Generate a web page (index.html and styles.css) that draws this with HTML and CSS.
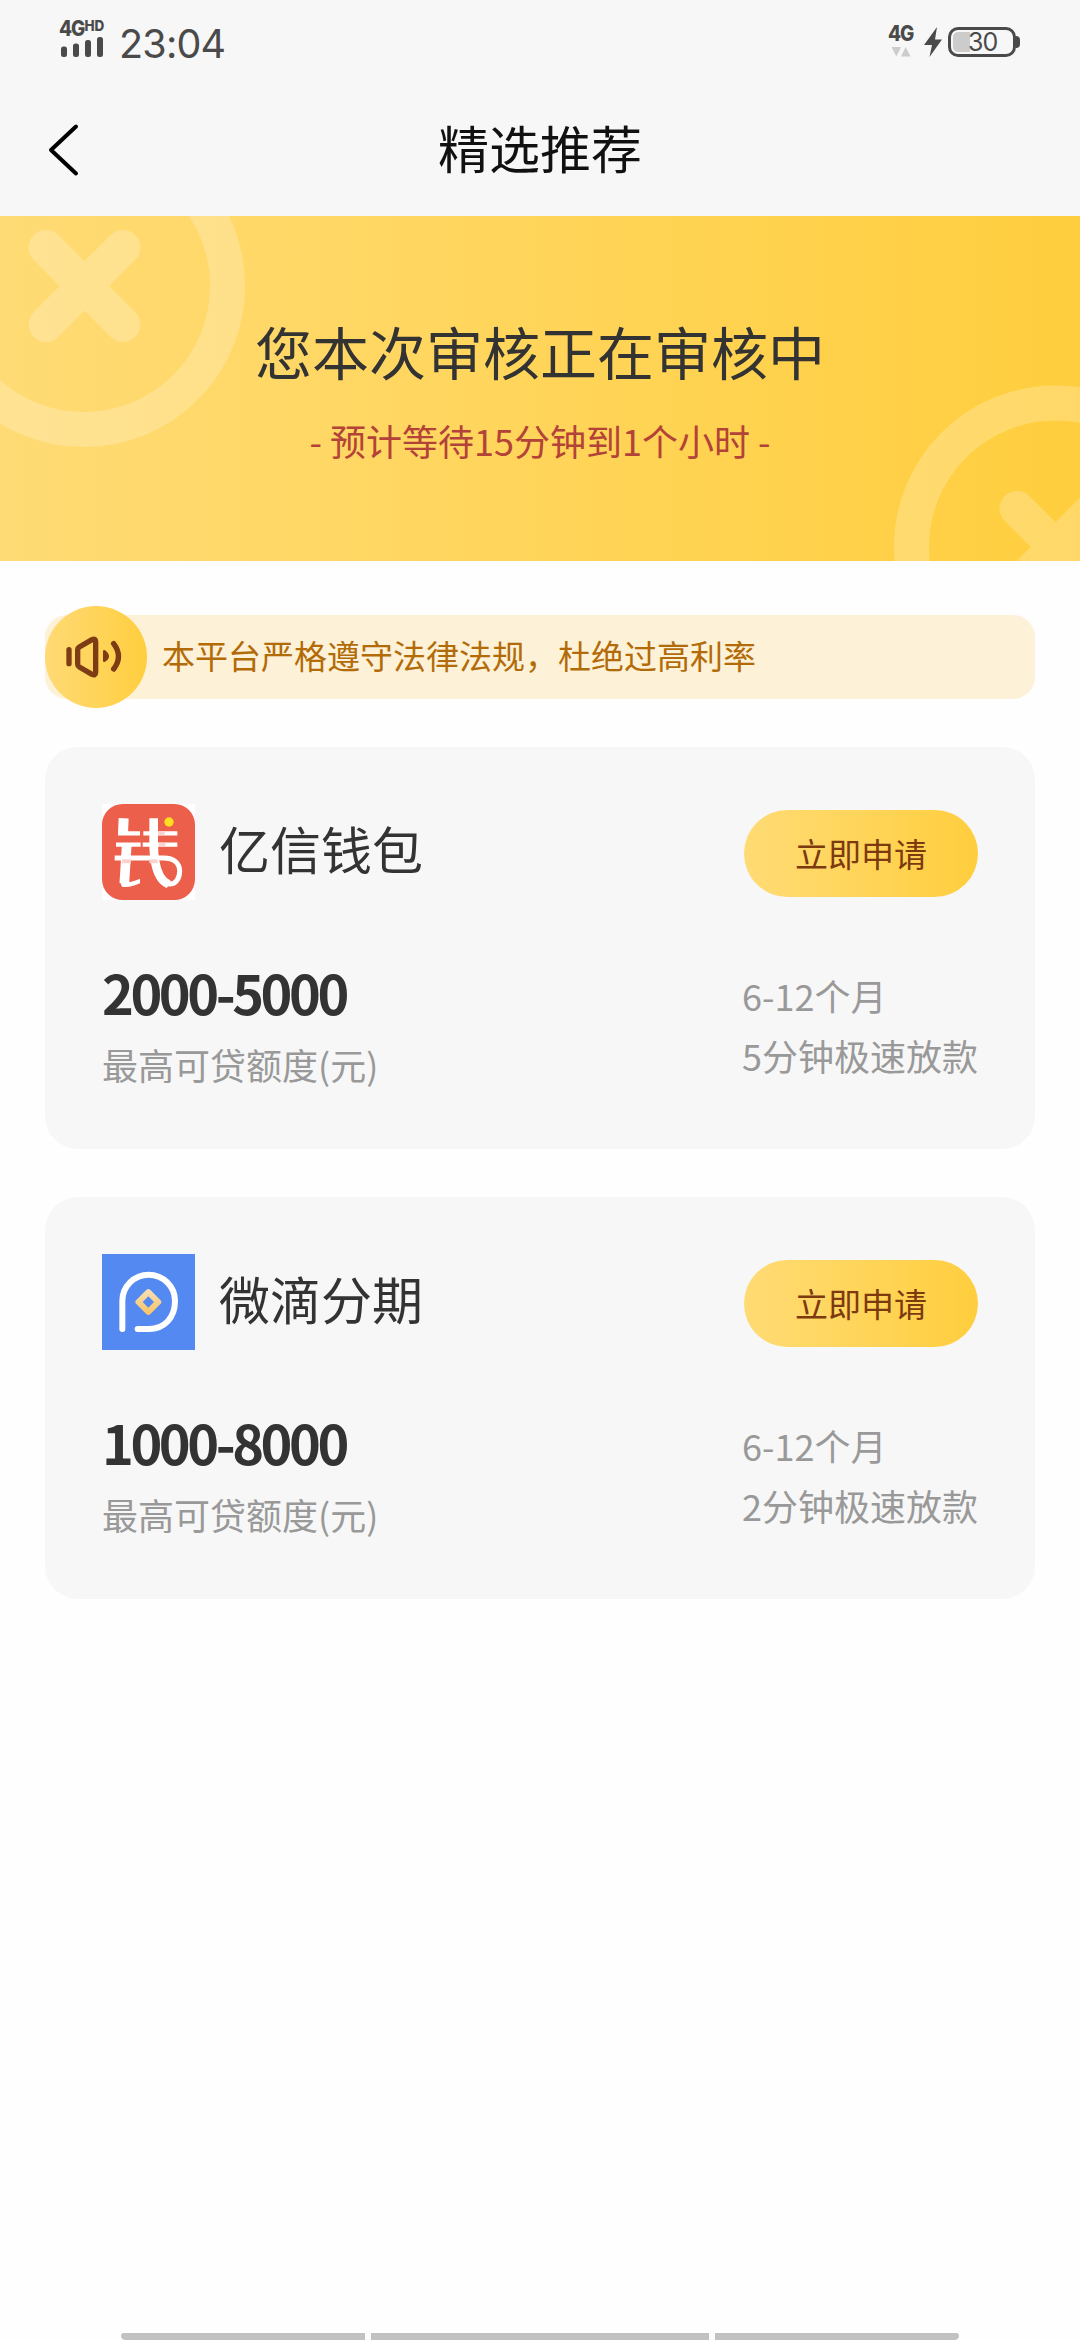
FILE: index.html
```html
<!DOCTYPE html>
<html lang="zh-CN">
<head>
<meta charset="utf-8">
<title>精选推荐</title>
<link rel="stylesheet" href="styles.css">
</head>
<body>
<div class="screen">
  <div class="status">
    <div class="status-left">
      <div class="signal">
        <div class="net">4G<span class="hd">HD</span></div>
        <svg class="bars" width="44" height="22" viewBox="0 0 44 22" fill="#4a4a4a"><rect x="1" y="10.500" width="6" height="10.500" rx="2.500"/><rect x="13" y="7.500" width="6" height="13.500" rx="2.500"/><rect x="25" y="4" width="6" height="17" rx="2.500"/><rect x="37" y="1" width="6" height="20" rx="2.500"/></svg>
      </div>
      <div class="clock">23:04</div>
    </div>
    <div class="status-right">
      <div class="data">
        <div class="net">4G</div>
        <svg width="20" height="10" viewBox="0 0 20 10" fill="#ccc"><path d="M0.500 0h9.500l-4.700 9.500zM10 9.500h9.500L14.700 0z"/></svg>
      </div>
      <svg class="bolt" width="18" height="30" viewBox="0 0 18 30" fill="#4a4a4a"><path d="M13 0 0 18h8L5.500 30 18 12.500H11z"/></svg>
      <div class="battery"><span class="battery-level"></span><span class="battery-text">30</span></div>
      <span class="battery-tip"></span>
    </div>
  </div>

  <header class="nav">
    <svg class="back" width="36" height="56" viewBox="0 0 36 56" fill="none" stroke="#000" stroke-width="4" stroke-linecap="round" stroke-linejoin="round"><path d="M31 4.500 6 28l25 23.500"/></svg>
    <h1 class="nav-title">精选推荐</h1>
  </header>

  <section class="banner">
    <svg class="banner-art" width="1080" height="345" viewBox="0 0 1080 345" fill="none">
      <g opacity=".22" stroke="#fff" stroke-width="35" stroke-linecap="round">
        <circle cx="84" cy="70" r="143.500"/><path d="M46 31.500 123 108.500M123 31.500 46 108.500"/>
        <circle cx="1055.500" cy="331" r="144"/><path d="M1017 292.500 1094 369.500M1094 292.500 1017 369.500"/>
      </g>
    </svg>
    <h2 class="banner-title">您本次审核正在审核中</h2>
    <p class="banner-sub">- 预计等待15分钟到1个小时 -</p>
  </section>

  <main class="content">
    <div class="notice">
      <div class="notice-icon">
        <svg width="102" height="102" viewBox="0 0 306 306" fill="none" stroke="#7d3c14" stroke-width="16" stroke-linecap="round" stroke-linejoin="round"><path d="M72 131v42M98 131q0-5 5-8l38-22q11-5 11 6v92q0 11-11 6l-38-22q-5-3-5-8zM206 113q29 39 0 76"/><path d="M178 136q20 15 0 28z" fill="#7d3c14" stroke-width="8"/></svg>
      </div>
      <p class="notice-text">本平台严格遵守法律法规，杜绝过高利率</p>
    </div>

    <article class="card">
      <div class="card-head">
        <svg class="logo logo-white" viewBox="0 0 279 288" fill="none" stroke="#fff">
          <rect width="279" height="288" rx="62" fill="#ec5f4b" stroke="none"/>
          <path d="M65 43 63 88" stroke-width="30"/>
          <path d="M48 88h66M124 88h102M42 122h74M122 122h104" stroke-width="13"/>
          <path d="M74 125 67 238" stroke-width="29"/>
          <path d="M54 233q18 8 60-9v14q-30 14-54 10z" fill="#fff" stroke="none"/>
          <path d="M38 162H184c34 0 49 17 49 40 0 22-12 38-30 38-22 0-31-20-38-44" stroke-width="15"/>
          <path d="M155 43v72c0 45 6 80 19 102q9 16 26 24" stroke-width="26"/>
          <path d="M60 172h27M142 172h25M168 88h20M170 122h20" stroke="#fbd3ce" stroke-width="12"/>
          <circle cx="201" cy="54" r="14" fill="#ffdf20" stroke="none"/>
        </svg>
        <h3 class="name">亿信钱包</h3>
        <button class="apply">立即申请</button>
      </div>
      <div class="card-body">
        <div class="quota"><div class="amount">2000-5000</div><div class="label">最高可贷额度(元)</div></div>
        <div class="terms"><div>6-12个月</div><div>5分钟极速放款</div></div>
      </div>
    </article>

    <article class="card">
      <div class="card-head">
        <svg class="logo" viewBox="0 0 279 288" fill="none" stroke-linecap="round" stroke-linejoin="round">
          <defs><linearGradient id="coin" x1="0" y1="0" x2="1" y2="1"><stop offset="0" stop-color="#f6dcae"/><stop offset="1" stop-color="#f8c76c"/></linearGradient></defs>
          <rect width="279" height="288" fill="#5389f0"/>
          <path d="M61 225V141a79 79 0 0 1 158 0c0 50-32 84-78 84h-34" stroke="#fff" stroke-width="18"/>
          <rect x="118" y="123" width="42" height="42" transform="rotate(45 139 144)" stroke="url(#coin)" stroke-width="18"/>
        </svg>
        <h3 class="name">微滴分期</h3>
        <button class="apply">立即申请</button>
      </div>
      <div class="card-body">
        <div class="quota"><div class="amount">1000-8000</div><div class="label">最高可贷额度(元)</div></div>
        <div class="terms"><div>6-12个月</div><div>2分钟极速放款</div></div>
      </div>
    </article>
  </main>

  <footer class="gesture"><span class="side first"></span><span class="middle"></span><span class="side last"></span></footer>
</div>
</body>
</html>
```
FILE: styles.css
```css
* { box-sizing: border-box; margin: 0; padding: 0; }
body { background: #fefefe; font-family: "Noto Sans CJK SC", sans-serif; color: #333; }
.screen { width: 1080px; height: 2340px; display: flex; flex-direction: column; overflow: hidden; }

.status { height: 84px; padding: 0 60px 0 59px; background: #f7f7f7; display: flex; justify-content: space-between; color: #4a4a4a; font-family: Inter, sans-serif; }
.status-left, .status-right { display: flex; align-items: flex-start; }
.signal { width: 48px; padding-top: 20px; }
.net { height: 16px; font-size: 19px; line-height: 18px; font-weight: 800; letter-spacing: -1px; display: flex; align-items: flex-start; white-space: nowrap; transform: scaleY(1.1); }
.hd { font-size: 13.500px; line-height: 13px; letter-spacing: 0; }
.bars { display: block; margin-left: 1px; }
.clock { margin: 20px 0 0 12px; font-size: 39.500px; line-height: 48px; letter-spacing: -0.800px; }
.data { padding-top: 25px; width: 27px; margin-right: 9px; }
.data svg { display: block; margin: 6px 0 0 3px; }
.bolt { margin: 27px 6px 0 0; }
.battery { width: 68px; height: 30px; margin-top: 27px; border: 3px solid #4a4a4a; border-radius: 10px; padding: 2px; display: flex; align-items: center; }
.battery-level { width: 17px; height: 20px; background: #ccc; border-radius: 5px 0 0 5px; }
.battery-text { margin-left: -2px; font-size: 25px; line-height: 24px; font-weight: 400; letter-spacing: -1px; }
.battery-tip { width: 4px; height: 12px; margin-top: 36px; background: #4a4a4a; border-radius: 0 4px 4px 0; }

.nav { height: 132px; padding: 0 45px; background: #f7f7f7; display: grid; grid-template-columns: 36px 1fr 36px; align-items: center; }
.back { display: block; }
.nav-title { font-size: 51px; line-height: 72px; font-weight: 400; color: #111; text-align: center; margin-top: -6px; }

.banner { position: relative; height: 345px; background: linear-gradient(90deg, #ffdb75, #ffce3e); text-align: center; padding-top: 92px; }
.banner-art { position: absolute; inset: 0; }
.banner-title { position: relative; font-size: 57px; line-height: 84px; font-weight: 400; }
.banner-sub { position: relative; font-size: 36px; line-height: 54px; margin-top: 21px; color: #b34238; }

.content { flex: 1; padding: 54px 45px 0; }
.notice { height: 84px; display: flex; align-items: center; background: #fdf2d7; border-radius: 22px; margin-bottom: 48px; }
.notice-icon { width: 102px; height: 102px; border-radius: 50%; background: linear-gradient(90deg, #ffda75, #ffce3e); }
.notice-icon svg { display: block; }
.notice-text { margin: -4px 0 0 15px; font-size: 33px; line-height: 48px; color: #b36b08; }

.card { height: 402px; margin-bottom: 48px; padding: 57px; background: #f7f7f7; border-radius: 33px; }
.card-head { display: flex; align-items: center; height: 96px; }
.logo { width: 93px; height: 96px; }
.logo-white { background: #fff; }
.name { margin: -8px 0 0 24px; font-size: 51px; line-height: 72px; font-weight: 400; }
.apply { margin-left: auto; margin-top: 3px; width: 234px; height: 87px; padding-bottom: 2px; border: 0; border-radius: 44px; background: linear-gradient(90deg, #ffdb75, #ffce3e); font: 33px/48px "Noto Sans CJK SC", sans-serif; color: #7d3a10; }
.card-body { display: flex; justify-content: space-between; }
.quota { padding-top: 53px; }
.amount { font-size: 54px; line-height: 78px; font-weight: 700; letter-spacing: -3.450px; }
.label { font-size: 36px; line-height: 54px; color: #999; margin-top: 6px; }
.terms { padding-top: 65px; font-size: 36px; line-height: 60px; color: #999; }

.gesture { height: 7px; display: flex; justify-content: center; gap: 6px; }
.side { width: 244px; background: #c1c1c1; }
.middle { width: 338px; background: #c1c1c1; }
.first { border-radius: 3px 0 0 5px; }
.last { border-radius: 0 3px 5px 0; }
```
